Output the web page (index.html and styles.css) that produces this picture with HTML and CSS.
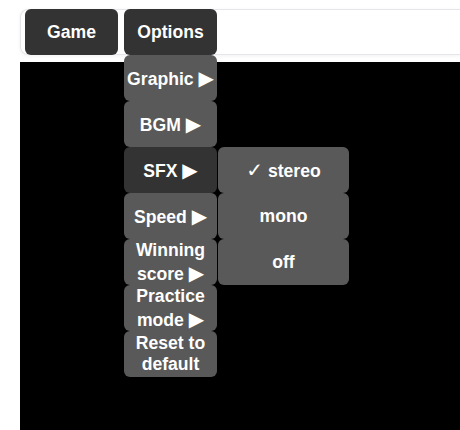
FILE: index.html
```
<!DOCTYPE HTML>
<html>

<head>
  <meta charset="utf-8">
  <title>Menu</title>
  <link rel="stylesheet" href="styles.css">
</head>

<body>
  <div class="menubar">
    <div class="menu">
      <div class="menu-btn">Game</div>
    </div>
    <div class="menu">
      <div class="menu-btn">Options</div>
      <ul class="dropdown">
        <li><span>Graphic <b class="arrow">▶</b></span></li>
        <li><span>BGM <b class="arrow">▶</b></span></li>
        <li class="hover"><span>SFX <b class="arrow">▶</b></span>
          <ul class="submenu">
            <li><span><b class="check">✓</b> stereo</span></li>
            <li><span>mono</span></li>
            <li><span>off</span></li>
          </ul>
        </li>
        <li><span>Speed <b class="arrow">▶</b></span></li>
        <li><span>Winning score <b class="arrow">▶</b></span></li>
        <li><span>Practice mode <b class="arrow">▶</b></span></li>
        <li><span>Reset to default</span></li>
      </ul>
    </div>
  </div>
  <div class="canvas"></div>
</body>

</html>
```
FILE: styles.css
```
* {
  margin: 0;
  padding: 0;
  box-sizing: border-box;
}

li {
  list-style: none;
}

html,
body {
  overflow: hidden;
}

body {
  background: #fff;
  padding: 9px 0 0 20px;
  font-family: "Liberation Sans", Arial, "DejaVu Sans", sans-serif;
  font-weight: bold;
  font-size: 17.6px;
  color: #fff;
}

.menubar {
  width: 440px;
  height: 46px;
  display: flex;
  gap: 6px;
  padding: 0 4px;
  border: 1px solid #e6e6ea;
  border-right: none;
  border-radius: 8px 0 0 8px;
  box-shadow: 0 1px 4px rgba(0, 0, 0, 0.06);
  position: relative;
  z-index: 2;
}

.menu {
  position: relative;
  margin-top: -1px;
}

.menu-btn {
  width: 93px;
  height: 46px;
  background: #333;
  border-radius: 6px;
  display: flex;
  align-items: center;
  justify-content: center;
}

.dropdown {
  position: absolute;
  top: 46px;
  left: 0;
  width: 93px;
}

.dropdown li,
.submenu li {
  height: 46px;
  background: #595959;
  border-radius: 6px;
  display: flex;
  align-items: center;
  justify-content: center;
  text-align: center;
  padding: 0 1px;
  position: relative;
}

.dropdown li.hover {
  background: #333;
}

.arrow {
  font-family: "DejaVu Sans", sans-serif;
  font-size: 20px;
  font-weight: normal;
}

.check {
  font-family: "DejaVu Sans", sans-serif;
  font-size: 20px;
}

.submenu {
  position: absolute;
  top: 0;
  left: 94px;
  width: 131px;
}

.canvas {
  width: 440px;
  height: 368px;
  margin-top: 7px;
  background: #000;
}
```
